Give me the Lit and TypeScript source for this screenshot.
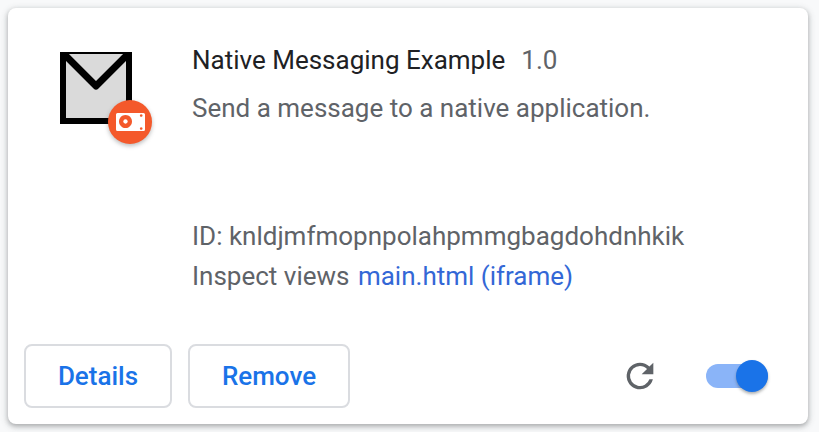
import { LitElement, html, css } from 'lit';
import { customElement } from 'lit/decorators.js';

@customElement('app-root')
export class AppRoot extends LitElement {
  static styles = css`
    :host {
      display: block;
      width: 819px;
      height: 432px;
      box-sizing: border-box;
      padding: 8px 11px 8px 8px;
      background: #f8f9fa;
      font-family: Roboto, sans-serif;
      overflow: hidden;
    }

    .card {
      height: 416px;
      box-sizing: border-box;
      display: flex;
      flex-direction: column;
      background: #fff;
      border-radius: 8px;
      box-shadow: 0 2px 4px rgba(60, 64, 67, 0.3), 0 2px 6px 2px rgba(60, 64, 67, 0.15);
    }

    .main {
      flex: 1;
      display: flex;
      padding: 44px 0 0 52px;
    }

    .icon-wrap {
      position: relative;
      width: 72px;
      height: 72px;
      margin-right: 60px;
    }

    .mail {
      display: block;
    }

    .badge {
      position: absolute;
      left: 48px;
      top: 48px;
      width: 44px;
      height: 44px;
      border-radius: 50%;
      background: #f4592b;
      box-shadow: 0 2px 4px rgba(60, 64, 67, 0.35);
      display: flex;
      align-items: center;
      justify-content: center;
    }

    .info {
      display: flex;
      flex-direction: column;
      margin-top: -8px;
    }

    .title-row {
      display: flex;
      align-items: baseline;
      font-size: 26px;
      line-height: 32px;
      color: #202124;
    }

    .version {
      margin-left: 16px;
      color: #5f6368;
    }

    .desc,
    .line {
      font-size: 26px;
      line-height: 40px;
      color: #5f6368;
    }

    .desc {
      margin-top: 12px;
    }

    .meta {
      margin-top: 88px;
    }

    .line a {
      color: #3367d6;
      text-decoration: none;
      margin-left: 2px;
    }

    .actions {
      display: flex;
      align-items: center;
      padding: 0 40px 16px 16px;
    }

    button {
      height: 64px;
      box-sizing: border-box;
      border: 2px solid #dadce0;
      border-radius: 8px;
      background: #fff;
      color: #1a73e8;
      font-family: inherit;
      font-size: 26px;
      font-weight: 500;
      padding: 0;
    }

    .details {
      width: 148px;
      margin-right: 16px;
    }

    .remove {
      width: 162px;
    }

    .spacer {
      flex: 1;
    }

    .reload {
      display: block;
      margin-right: 46px;
    }

    .toggle {
      position: relative;
      width: 62px;
      height: 24px;
      border-radius: 12px;
      background: #8ab4f8;
    }

    .knob {
      position: absolute;
      left: 30px;
      top: -4px;
      width: 32px;
      height: 32px;
      border-radius: 50%;
      background: #1a73e8;
      box-shadow: 0 2px 3px rgba(60, 64, 67, 0.4);
    }
  `;

  render() {
    return html`
      <div class="card">
        <div class="main">
          <div class="icon-wrap">
            <svg class="mail" width="72" height="72" viewBox="0 0 72 72">
              <path d="M0 0H72V72H0z" fill="#000"/>
              <path d="M6 2H66V66H6z" fill="#dadada"/>
              <path d="M0 -2L36 34L72 -2" fill="none" stroke="#000" stroke-width="7" stroke-linejoin="round"/>
            </svg>
            <div class="badge">
              <svg width="29" height="18" viewBox="0 0 29 18">
                <path fill="#fff" fill-rule="evenodd" d="M1.5 0H27.5A1.5 1.5 0 0 1 29 1.5V16.5A1.5 1.5 0 0 1 27.5 18H1.5A1.5 1.5 0 0 1 0 16.5V1.5A1.5 1.5 0 0 1 1.5 0zM25.2 1.2a1.3 1.3 0 1 0 .01 0zM25.2 14.2a1.3 1.3 0 1 0 .01 0zM9.5 2a6.5 6.5 0 1 0 .01 0zM9.5 6.3a2.2 2.2 0 1 1-.01 0z"/>
              </svg>
            </div>
          </div>
          <div class="info">
            <div class="title-row"><span>Native Messaging Example</span><span class="version">1.0</span></div>
            <div class="desc">Send a message to a native application.</div>
            <div class="meta">
              <div class="line">ID: knldjmfmopnpolahpmmgbagdohdnhkik</div>
              <div class="line">Inspect views <a href="#">main.html (iframe)</a></div>
            </div>
          </div>
        </div>
        <div class="actions">
          <button class="details">Details</button>
          <button class="remove">Remove</button>
          <div class="spacer"></div>
          <svg class="reload" width="40" height="40" viewBox="0 0 24 24">
            <path fill="#5f6368" d="M17.65 6.35A7.96 7.96 0 0 0 12 4a8 8 0 1 0 7.73 10h-2.08A6 6 0 1 1 12 6c1.66 0 3.14.69 4.22 1.78L13 11h7V4l-2.35 2.35z"/>
          </svg>
          <div class="toggle"><div class="knob"></div></div>
        </div>
      </div>
    `;
  }
}
